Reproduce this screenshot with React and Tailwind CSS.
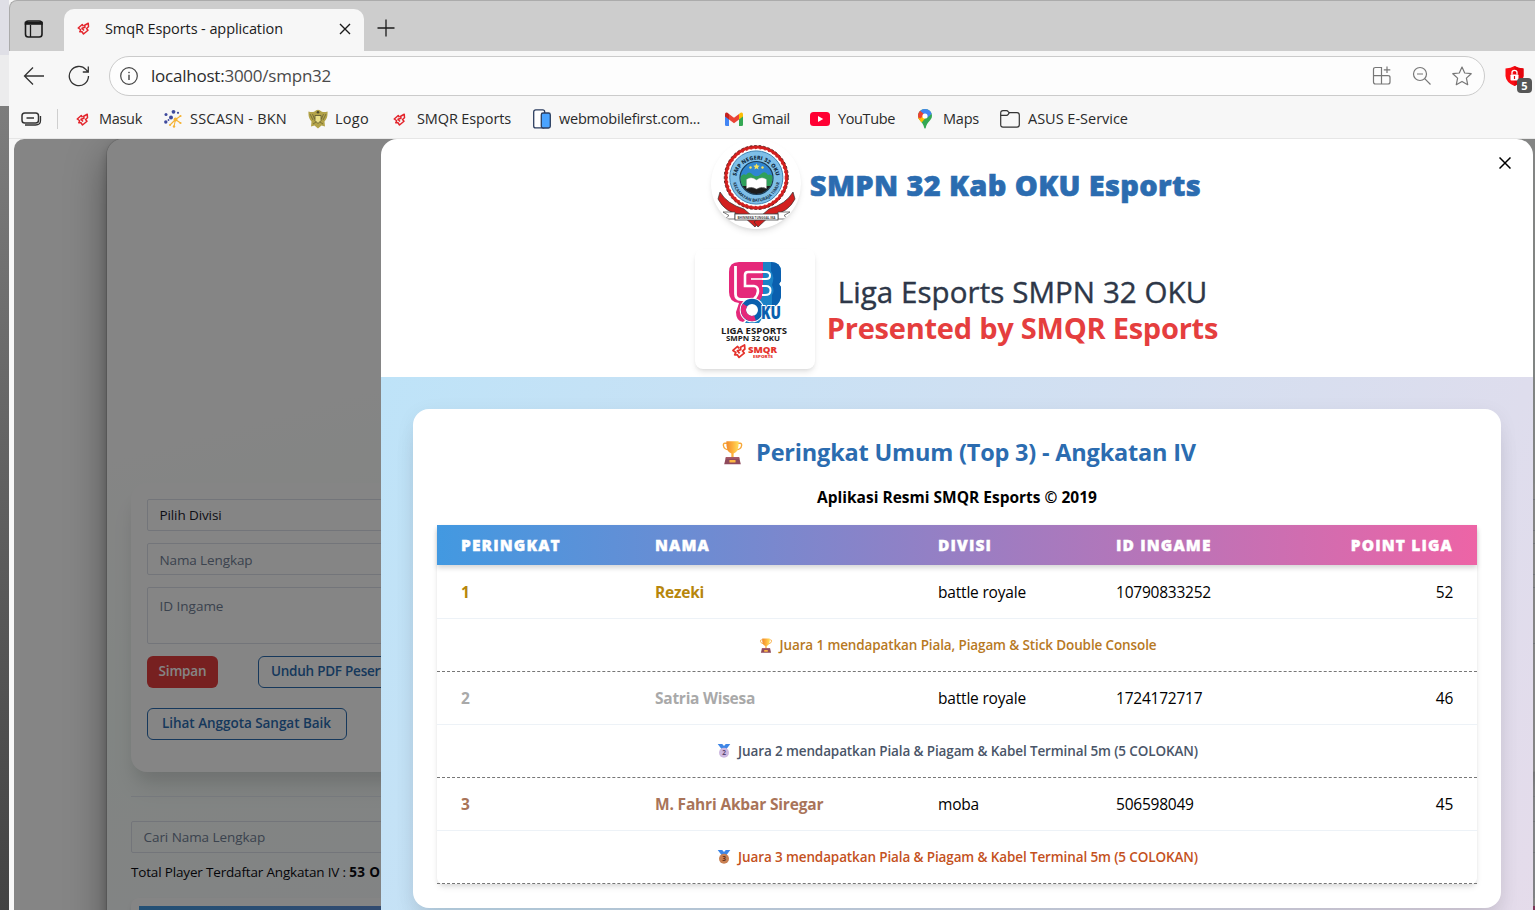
import { Fragment } from "react";

const SANS = "font-['Open_Sans','Noto_Sans',sans-serif]";

/* ---------- brand marks ---------- */

function SmqrMark({ className }) {
  return (
    <svg viewBox="0 0 26 26" className={className} fill="none" strokeLinejoin="round">
      <path d="M13 8.500 L10.500 5 L2.500 12 L7.500 15.500 L5.500 19.500 H10 L13 24 L22 16.500 L19 13 L23 9.500 L22.500 2.500 L15.500 6.500 L16 10.500 L10 12.500 L14 17" stroke="#e3242b" strokeWidth="3" />
    </svg>
  );
}

function SscasnIcon() {
  return (
    <svg viewBox="0 0 20 20" className="size-5">
      <g stroke="#f5b335" strokeWidth="1.1">
        <path d="M12.500 10.500 L17.500 7 M12.500 10.500 L17.500 14 M12.500 10.500 L11 17.500 M12.500 10.500 L7 16" />
      </g>
      <g fill="#f5b335">
        <circle cx="12.500" cy="10.500" r="1.900" />
        <circle cx="17.500" cy="7" r="1.100" />
        <circle cx="17.500" cy="14" r="1.100" />
        <circle cx="11" cy="17.500" r="1.200" />
        <circle cx="7" cy="16" r="1" />
      </g>
      <g fill="#3f4a9d">
        <circle cx="10.500" cy="2.800" r="1.900" />
        <circle cx="3" cy="5.500" r="1.500" />
        <circle cx="8" cy="8.500" r="2" />
        <circle cx="2.800" cy="13" r="1.700" />
        <circle cx="15" cy="3.800" r="1.100" />
        <circle cx="5.500" cy="11" r=".9" />
      </g>
    </svg>
  );
}

function GarudaIcon() {
  return (
    <svg viewBox="0 0 20 20" className="size-5">
      <path d="M0.500 2.500 Q4 3.500 6.500 2.500 Q10 -1 13.500 2.500 Q16 3.500 19.500 2.500 Q20 9 16.500 12.500 L17 17.500 L13.500 16.500 L10 19.500 L6.500 16.500 L3 17.500 L3.500 12.500 Q0 9 0.500 2.500Z" fill="#b3a348" />
      <path d="M2 5 L5 11 M4.500 5 L6.500 10 M18 5 L15 11 M15.500 5 L13.500 10 M5 15 L8 13 M15 15 L12 13" stroke="#6c6536" strokeWidth=".8" />
      <path d="M7 6.500 h6 v5 l-3 3 l-3 -3z" fill="#eadf86" stroke="#55502c" strokeWidth=".8" />
      <circle cx="10" cy="3.300" r="1.300" fill="#4f4a2a" />
    </svg>
  );
}

function PhonesIcon() {
  return (
    <svg viewBox="0 0 20 20" className="size-5">
      <rect x="1.700" y="0.900" width="11" height="18" rx="2" fill="#fff" stroke="#2c3e60" strokeWidth="1.300" />
      <rect x="9.300" y="4" width="9" height="15" rx="1.800" fill="#4aa3ff" stroke="#2c3e60" strokeWidth="1.300" />
    </svg>
  );
}

function GmailIcon() {
  return (
    <svg viewBox="0 0 20 20" className="size-5">
      <path d="M1 5.500 L5 8.500 V17 H2.300 Q1 17 1 15.700Z" fill="#4285f4" />
      <path d="M19 5.500 L15 8.500 V17 H17.700 Q19 17 19 15.700Z" fill="#34a853" />
      <path d="M15 5 L16.500 3.800 Q19 2.600 19 5.800 V7.500 L15 10.500Z" fill="#fbbc04" />
      <path d="M5 5 L10 8.800 L15 5 V10.500 L10 14.200 L5 10.500Z" fill="#ea4335" />
      <path d="M5 5 L3.500 3.800 Q1 2.600 1 5.800 V7.500 L5 10.500Z" fill="#c5221f" />
    </svg>
  );
}

function YoutubeIcon() {
  return (
    <svg viewBox="0 0 20 20" className="size-5">
      <rect x="0" y="3" width="20" height="14" rx="3.500" fill="#ff0033" />
      <path d="M8 7 L13.200 10 L8 13Z" fill="#fff" />
    </svg>
  );
}

function MapsIcon() {
  return (
    <svg viewBox="0 0 20 20" className="size-5">
      <defs>
        <clipPath id="pin">
          <path d="M10 0 C14 0 17 3 17 6.800 C17 11.500 11.800 13 10.800 18.700 Q10 20.500 9.200 18.700 C8.200 13 3 11.500 3 6.800 C3 3 6 0 10 0Z" />
        </clipPath>
      </defs>
      <g clipPath="url(#pin)">
        <rect width="20" height="20" fill="#34a853" />
        <path d="M0 8 L9 8 L10 9 L5.500 15 L0 16Z" fill="#fbbc04" />
        <path d="M5 2 L8 -2 H20 L17.500 4 L12 9 L7 4Z" fill="#4285f4" />
        <path d="M4.700 1.500 L9.500 5.500 L4.500 11 L2 9 L1 4Z" fill="#ea4335" />
        <path d="M2 8 L5.500 9.500 L10 5.500 L10 9.500 L5 15Z" fill="#fbbc04" />
      </g>
      <circle cx="10" cy="7" r="2.600" fill="#fff" />
    </svg>
  );
}

function FolderIcon() {
  return (
    <svg viewBox="0 0 20 20" className="size-5" fill="none" stroke="#333" strokeWidth="1.2">
      <path d="M0.700 4 Q0.700 1.700 3 1.700 H6.500 Q7.500 1.700 8.200 2.600 L9.200 3.700 H17 Q19.300 3.700 19.300 6 V15.800 Q19.300 18.100 17 18.100 H3 Q0.700 18.100 0.700 15.800Z" />
      <path d="M0.700 6.300 H6.500 Q7.500 6.300 8.200 5.300 L9.200 3.900" />
    </svg>
  );
}

/* ---------- prize icons ---------- */

function Trophy({ className }) {
  return (
    <svg viewBox="0 0 24 28" className={className}>
      <defs>
        <linearGradient id="cup" x1="0" x2="1">
          <stop offset="0" stopColor="#f08a2c" />
          <stop offset=".5" stopColor="#fdb03c" />
          <stop offset="1" stopColor="#ffdf5c" />
        </linearGradient>
      </defs>
      <path d="M6 3.500 H3.200 Q1.300 3.500 1.600 6 Q2.200 10.500 8 11 M18 3.500 H20.800 Q22.700 3.500 22.400 6 Q21.800 10.500 16 11" fill="none" stroke="#f7a83a" strokeWidth="1.6" />
      <path d="M5 1 H19 Q19.500 13.500 13.300 15 V20 H10.700 V15 Q4.500 13.500 5 1Z" fill="url(#cup)" />
      <path d="M4.500 19 H19.500 L21.500 27.500 H2.500Z" fill="#8f4a5c" />
      <path d="M4.500 19 H19.500 L20 21 H4Z" fill="#a55a68" />
      <rect x="8.500" y="22.500" width="7" height="3" rx=".6" fill="#fcb643" />
    </svg>
  );
}

function Medal({ place, fill, ink }) {
  return (
    <svg viewBox="0 0 14 16" className="h-4 w-3.5">
      <path d="M0.700 1 H5.200 L7 3 L8.800 1 H13.300 L9.500 6 H4.500Z" fill="#3f86e6" />
      <circle cx="7" cy="9.800" r="5" fill={fill} />
      <text x="7" y="12.200" textAnchor="middle" fontSize="6.500" fontWeight="700" fill={ink} fontFamily="Open Sans, sans-serif">
        {place}
      </text>
    </svg>
  );
}

/* ---------- crests ---------- */

function SchoolCrest() {
  return (
    <svg viewBox="0 0 90 90" className="size-[90px]">
      <defs>
        <path id="arcTop" d="M25 41 A20.300 20.300 0 1 1 65.600 41" />
        <path id="arcBottom" d="M21.500 39 A23.800 23.800 0 0 0 69.100 39" />
        <clipPath id="disc">
          <circle cx="45.500" cy="39" r="16" />
        </clipPath>
      </defs>
      <path d="M9 53 Q16 65 33 70 L48 83 L44 88 L31 76 Q14 74 7 60Z" fill="#d2201f" stroke="#333" strokeWidth=".7" />
      <path d="M82 53 Q75 65 58 70 L43 83 L47 88 L60 76 Q77 74 84 60Z" fill="#d2201f" stroke="#333" strokeWidth=".7" />
      <circle cx="45.300" cy="38.500" r="30.500" fill="#fff" stroke="#d2201f" strokeWidth="3" />
      <circle cx="45.300" cy="38.500" r="32" fill="none" stroke="#5c2320" strokeWidth="1" strokeDasharray="2.500 2" />
      <circle cx="45.300" cy="38.500" r="29" fill="none" stroke="#d2201f" strokeWidth="1.200" strokeDasharray="2 2.500" />
      <circle cx="45.300" cy="38.500" r="26.600" fill="#7fbfe8" stroke="#3d84b5" strokeWidth="1" />
      <circle cx="45.500" cy="39" r="16.500" fill="#2f86d1" stroke="#1b3c55" strokeWidth="1.200" />
      <g clipPath="url(#disc)">
        <path d="M28 41 Q31 33 35 36 Q38 31 42 36 Q46 39 50 35 Q54 31 57 36 Q61 34 64 41 V50 H28Z" fill="#2fa05a" />
        <path d="M28 47 H64 V60 H28Z" fill="#1d1d1d" />
      </g>
      <path d="M45.500 41 Q40 37 35.500 40.500 V49.500 Q41 47 45.500 50 Q50 47 55.500 49.500 V40.500 Q51 37 45.500 41Z" fill="#fff" stroke="#999" strokeWidth=".4" />
      <g fill="#f7e35a">
        <path d="M45.500 24.500 l1 2 l2.200 .2 l-1.700 1.500 l.5 2.200 l-2 -1.100 l-2 1.100 l.5 -2.200 l-1.700 -1.500 l2.200 -.2z" />
        <circle cx="39.500" cy="28.500" r="1.200" />
        <circle cx="51.500" cy="28.500" r="1.200" />
      </g>
      <text fontSize="5.500" fontWeight="800" fill="#16324a" fontFamily="Open Sans, sans-serif">
        <textPath href="#arcTop" startOffset="50%" textAnchor="middle">SMP NEGERI 32 OKU</textPath>
      </text>
      <text fontSize="4.300" fontWeight="700" fill="#16324a" fontFamily="Open Sans, sans-serif">
        <textPath href="#arcBottom" startOffset="50%" textAnchor="middle">KECAMATAN BATURAJA TIMUR</textPath>
      </text>
      <path d="M12 73 H24 V80 H14 L18 76.500Z M79 73 H67 V80 H77 L73 76.500Z" fill="#fff" stroke="#444" strokeWidth=".7" />
      <rect x="24" y="75" width="43" height="6" fill="#fff" stroke="#444" strokeWidth=".8" />
      <text x="45.500" y="79.600" fontSize="3.800" fontWeight="700" textAnchor="middle" fill="#444" textLength="38" lengthAdjust="spacingAndGlyphs" fontFamily="Open Sans, sans-serif">
        BHINNEKA TUNGGAL IKA
      </text>
    </svg>
  );
}

function LeagueCrest() {
  return (
    <svg viewBox="0 0 120 120" className="size-[120px]" fontFamily="Open Sans, sans-serif">
      <path d="M44 13 H68 V48 L62 60 L48 73 Q41 72 41 63 L44 54 Q34 53 34 43 V23 Q34 13 44 13Z" fill="#e5287a" />
      <path d="M68 13 H76 Q86 13 86 23 V32 L84 35 L86 38 V48 Q84 58 74 60 L64 74 H50 L60 60 L68 46Z" fill="#1b82c6" />
      <path d="M76 13 Q86 13 86 23 V32 L84 35 L86 38 V48 Q84 56 77 58 V46 Q80 42 77 36 Q80 28 76 22Z" fill="#0a5fae" />
      <path d="M40.500 17 V45 Q40.500 50.500 46 50.500 H54" stroke="#fff" strokeWidth="2.800" fill="none" />
      <path d="M67 23 H53 Q50 23 50 26 V37 H59 Q63 37.500 63 42 Q63 46 59 50" stroke="#fff" strokeWidth="2.600" fill="none" />
      <path d="M56 30 H67" stroke="#fff" strokeWidth="1.600" />
      <path d="M67 23 H71 Q75 23 75 26.500 Q75 30 71 30 H67 M67 37 H71 Q75.500 37 75.500 41.500 Q75.500 46 70 46 H67" stroke="#fff" strokeWidth="2" fill="none" />
      <circle cx="57" cy="61" r="12.300" fill="#fff" />
      <circle cx="57" cy="61" r="8.600" fill="#fff" stroke="#0a5fae" strokeWidth="5.200" />
      <path d="M50 56 A8.600 8.600 0 0 0 60 69" fill="none" stroke="#e5287a" strokeWidth="5.200" />
      <text x="66" y="69.500" fontSize="17.500" fontWeight="800" textLength="20" lengthAdjust="spacingAndGlyphs" fill="#0a5fae" stroke="#fff" strokeWidth="2" paintOrder="stroke">
        KU
      </text>
      <text x="59" y="85" fontSize="9.500" fontWeight="700" textAnchor="middle" textLength="66" lengthAdjust="spacingAndGlyphs" fill="#1c1c1c">
        LIGA ESPORTS
      </text>
      <text x="58" y="92.200" fontSize="7.500" fontWeight="700" textAnchor="middle" textLength="54" lengthAdjust="spacingAndGlyphs" fill="#1c1c1c">
        SMPN 32 OKU
      </text>
      <g transform="translate(36.500 94.500) scale(.58)">
        <path d="M13 8.500 L10.500 5 L2.500 12 L7.500 15.500 L5.500 19.500 H10 L13 24 L22 16.500 L19 13 L23 9.500 L22.500 2.500 L15.500 6.500 L16 10.500 L10 12.500 L14 17" fill="none" stroke="#e5332c" strokeWidth="3" strokeLinejoin="round" />
      </g>
      <text x="53" y="103.600" fontSize="8" fontWeight="800" textLength="29" lengthAdjust="spacingAndGlyphs" fill="#e5332c">
        SMQR
      </text>
      <text x="58" y="108.800" fontSize="4.200" fontWeight="800" textLength="20" lengthAdjust="spacingAndGlyphs" fill="#e5332c">
        ESPORTS
      </text>
    </svg>
  );
}

/* ---------- browser chrome ---------- */

function TabStrip() {
  return (
    <div className="flex h-[51px] items-end rounded-tl-lg border-t border-l border-[#ababab] bg-[#cdcdcd]">
      <div className="flex h-[41px] w-[54px] pl-[14px] pt-[9px]">
        <svg viewBox="0 0 20 20" className="size-5" fill="none" stroke="#1b1b1b" strokeWidth="1.6">
          <rect x="1.500" y="2" width="16.500" height="16" rx="2.800" />
          <path d="M1.500 3.500 H18 V5 H1.500Z" fill="#1b1b1b" />
          <path d="M6.500 6 V18" strokeWidth="1.300" />
        </svg>
      </div>
      <div className="flex h-[42px] w-[300px] items-center rounded-t-[10px] bg-[#f7f7f7] pb-[3px] pl-[13px]">
        <SmqrMark className="size-[13px]" />
        <span className="ml-[15px] text-[14.5px] tracking-[-0.09px] text-[#1b1b1b]">SmqR Esports - application</span>
        <svg viewBox="0 0 12 12" className="ml-auto mr-[13px] size-3" stroke="#1b1b1b" strokeWidth="1.4">
          <path d="M1 1 L11 11 M11 1 L1 11" />
        </svg>
      </div>
      <svg viewBox="0 0 18 18" className="mb-[14px] ml-[13px] size-[18px]" stroke="#1b1b1b" strokeWidth="1.3">
        <path d="M9 0.500 V17.500 M0.500 9 H17.500" />
      </svg>
    </div>
  );
}

function AddressBar() {
  return (
    <div className="flex h-[45px] items-center pt-[5px] pl-[14px]">
      <svg viewBox="0 0 22 20" className="h-5 w-[22px]" fill="none" stroke="#333" strokeWidth="1.3">
        <path d="M21 10 H1.500 M10 1.500 L1.500 10 L10 18.500" />
      </svg>
      <svg viewBox="0 0 22 22" className="ml-[23px] size-[22px]" fill="none" stroke="#333" strokeWidth="1.3">
        <path d="M20.500 11 A9.600 9.600 0 1 1 18 4.600 L20 6.800 M20.300 1.500 V7 H14.800" />
      </svg>
      <div className="ml-[19px] flex h-10 w-[1376px] items-center rounded-full border border-[#cbcbcb] bg-[#fdfdfd] pl-[10px] pr-3">
        <svg viewBox="0 0 18 18" className="size-[18px]" fill="none" stroke="#444" strokeWidth="1.2">
          <circle cx="9" cy="9" r="8.300" />
          <path d="M9 7.800 V13" strokeWidth="1.400" />
          <circle cx="9" cy="5.500" r=".5" strokeWidth=".9" />
        </svg>
        <span className="ml-[13px] text-[17px] tracking-[-0.23px] text-[#2c2c2c]">
          localhost:<span className="text-[#4a4a4a]">3000/smpn32</span>
        </span>
        <div className="ml-auto flex items-center gap-5 text-[#777]">
          <svg viewBox="0 0 20 20" className="size-5" fill="none" stroke="currentColor" strokeWidth="1.2">
            <path d="M9.500 18 H3.500 Q1.500 18 1.500 16 V3.500 Q1.500 1.500 3.500 1.500 H9.500 V18 H16 Q18 18 18 16 V11.500 Q18 9.700 16 9.700 H1.500 M15 0.500 V7 M11.800 3.800 H18.300" />
          </svg>
          <svg viewBox="0 0 20 20" className="size-5" fill="none" stroke="currentColor" strokeWidth="1.2">
            <circle cx="8" cy="8" r="6.500" />
            <path d="M5 8 H11 M12.700 12.700 L18.500 18.500" />
          </svg>
          <svg viewBox="0 0 20 20" className="size-5" fill="none" stroke="currentColor" strokeWidth="1.2" strokeLinejoin="round">
            <path d="M10 1 L12.700 7 L19.200 7.700 L14.400 12.100 L15.700 18.700 L10 15.400 L4.300 18.700 L5.600 12.100 L0.800 7.700 L7.300 7Z" />
          </svg>
        </div>
      </div>
      <div className="relative ml-[20px] size-5">
        <svg viewBox="0 0 20 20" className="size-5">
          <path d="M9.500 0 Q13 2.300 18.500 2.500 V10 Q18 16.500 9.500 20 Q1 16.500 0.500 10 V2.500 Q6 2.300 9.500 0Z" fill="#fb0d14" />
          <path d="M9.500 0 Q13 2.300 18.500 2.500 V10 Q18 16.500 9.500 20Z" fill="#e2040c" />
          <rect x="5.500" y="8.500" width="8" height="6" rx=".8" fill="#fff" />
          <path d="M7 8.500 V6.500 Q7 4.300 9.500 4.300 Q12 4.300 12 6.500 V8.500" fill="none" stroke="#fff" strokeWidth="1.300" />
          <path d="M9.500 10 V13" stroke="#e2040c" strokeWidth="1.200" />
        </svg>
        <span className="absolute top-3 left-3 flex h-[15px] w-[15px] items-center justify-center rounded-[4px] bg-[#565656] text-[11px] leading-none font-bold text-white">
          5
        </span>
      </div>
    </div>
  );
}

const BOOKMARKS = [
  { label: "Masuk", icon: <SmqrMark className="mr-[2px] size-[13px]" />, slot: "w-[90px]", text: "ml-[6px] tracking-[-0.31px]" },
  { label: "SSCASN - BKN", icon: <SscasnIcon />, slot: "w-[145px]", text: "ml-[7px] tracking-[0.21px]" },
  { label: "Logo", icon: <GarudaIcon />, slot: "w-[82px]", text: "ml-[7px] tracking-[0.28px]" },
  { label: "SMQR Esports", icon: <SmqrMark className="mr-[2px] size-[13px]" />, slot: "w-[142px]", text: "ml-[7px] tracking-[-0.13px]" },
  { label: "webmobilefirst.com...", icon: <PhonesIcon />, slot: "w-[192px]", text: "ml-[7px] tracking-[-0.22px]" },
  { label: "Gmail", icon: <GmailIcon />, slot: "w-[86px]", text: "ml-[8px] tracking-[-0.27px]" },
  { label: "YouTube", icon: <YoutubeIcon />, slot: "w-[105px]", text: "ml-[8px] tracking-[-0.38px]" },
  { label: "Maps", icon: <MapsIcon />, slot: "w-[85px]", text: "ml-[8px] tracking-[-0.22px]" },
  { label: "ASUS E-Service", icon: <FolderIcon />, slot: "w-[140px]", text: "ml-[8px] tracking-[-0.01px]" },
];

function BookmarksBar() {
  return (
    <div className="flex h-[43px] items-center border-b border-[#e6e6e6] pt-1 pl-[12px]">
      <svg viewBox="0 0 22 16" className="h-4 w-[22px]" fill="none" stroke="#333" strokeWidth="1.5">
        <rect x="1" y="2" width="16.500" height="10" rx="2.800" />
        <path d="M5.500 7 H13" />
        <path d="M4 14 H14.500 Q19.500 14 19.500 9.500 V5" strokeWidth="1.300" />
      </svg>
      <div className="ml-[14px] h-5 w-px bg-[#cfcfcf]" />
      <div className="ml-[15px] flex items-center">
        {BOOKMARKS.map((b, i) => (
          <div key={i} className={`flex shrink-0 items-center whitespace-nowrap ${b.slot}`}>
            <span className="flex size-5 shrink-0 items-center justify-center">{b.icon}</span>
            <span className={`text-[14.5px] leading-5 text-[#2a2a2a] ${b.text}`}>{b.label}</span>
          </div>
        ))}
      </div>
    </div>
  );
}

/* ---------- page under the dialog ---------- */

function RegistrationPage() {
  return (
    <div className="h-full bg-white pl-[93px] text-[13.5px]">
      <div className="h-[900px] w-[1440px] rounded-2xl bg-[linear-gradient(165deg,#ffffff_25%,#f8fffb_46%,#fbfbff_75%,#f3f6ff_100%)] pt-[344px] pl-6 shadow-[0_0_0_1px_rgba(0,0,0,0.1),0_5px_10px_rgba(0,0,0,0.2),0_15px_40px_rgba(0,0,0,0.4)]">
        <div className="h-[289px] rounded-2xl bg-white pt-4 pl-4 shadow-[0_20px_25px_-5px_rgba(0,0,0,0.1),0_10px_15px_-3px_rgba(0,0,0,0.06)]">
          <div className="h-8 rounded-[2px] border border-[#dde1ea] pl-[11.5px] leading-[30px] tracking-[-0.11px] text-[#1a202c]">Pilih Divisi</div>
          <div className="mt-3 h-8 rounded-[2px] border border-[#dde1ea] pl-[11.5px] leading-8 tracking-[-0.11px] text-[#718096]">Nama Lengkap</div>
          <div className="mt-3 h-[57px] rounded-[2px] border border-[#dde1ea] pt-2 pl-[11.5px] leading-5 tracking-[-0.01px] text-[#718096]">ID Ingame</div>
          <div className="mt-3 flex font-semibold">
            <div className="flex h-8 w-[71px] items-center justify-center rounded-md bg-[#e53e3e] pb-px tracking-[-0.15px] text-white">Simpan</div>
            <div className="ml-10 flex h-8 w-[190px] items-center rounded-md border border-[#2b6cb0] pb-px pl-3 tracking-[-0.25px] whitespace-nowrap text-[#2b6cb0]">
              Unduh PDF Peserta
            </div>
          </div>
          <div className="mt-5 flex h-8 w-[200px] items-center justify-center rounded-md border border-[#2b6cb0] pr-px pb-px font-semibold tracking-[-0.04px] text-[#2b6cb0]">
            Lihat Anggota Sangat Baik
          </div>
        </div>
        <div className="mt-6 h-px bg-[#e2e8f0]" />
        <div className="mt-6 h-8 rounded-[2px] border border-[#dde1ea] pl-[11.5px] leading-[30px] tracking-[-0.06px] text-[#718096]">Cari Nama Lengkap</div>
        <div className="mt-2 leading-[22px] text-[#0b0b12]">
          <span className="tracking-[-0.17px]">Total Player Terdaftar Angkatan IV : </span>
          <b className="tracking-[0.35px]">53 Orang</b>
        </div>
        <div className="mt-[15px] h-20 rounded-lg bg-white pt-2 pl-2 shadow-md">
          <div className="h-10 bg-linear-to-r/srgb from-[#4299e1] to-[#ed64a6]" />
        </div>
      </div>
    </div>
  );
}

/* ---------- leaderboard dialog ---------- */

const ROWS = [
  {
    rank: 1,
    name: "Rezeki",
    nameClass: "text-[#b7860b] tracking-[-0.24px]",
    division: "battle royale",
    id: "10790833252",
    points: 52,
    prize: "Juara 1 mendapatkan Piala, Piagam & Stick Double Console",
    prizeClass: "text-[#b7791f]",
    icon: <Trophy className="h-[15px] w-[14px]" />,
  },
  {
    rank: 2,
    name: "Satria Wisesa",
    nameClass: "text-[#a9a9a9] tracking-[-0.26px]",
    division: "battle royale",
    id: "1724172717",
    points: 46,
    prize: "Juara 2 mendapatkan Piala & Piagam & Kabel Terminal 5m (5 COLOKAN)",
    prizeClass: "text-[#4a5568]",
    icon: <Medal place="2" fill="#cdb8e0" ink="#5a4570" />,
  },
  {
    rank: 3,
    name: "M. Fahri Akbar Siregar",
    nameClass: "text-[#a97459] tracking-[-0.17px]",
    division: "moba",
    id: "506598049",
    points: 45,
    prize: "Juara 3 mendapatkan Piala & Piagam & Kabel Terminal 5m (5 COLOKAN)",
    prizeClass: "text-[#c4511d]",
    icon: <Medal place="3" fill="#c98052" ink="#5f2f18" />,
  },
];

function Leaderboard() {
  return (
    <div className="rounded-b-md shadow-[0_4px_6px_-1px_rgba(0,0,0,0.1),0_2px_4px_-1px_rgba(0,0,0,0.08)]">
      <div className="flex h-10 items-center bg-linear-to-r/srgb from-[#4299e1] to-[#ed64a6] pt-[2px] pr-6 text-[15.5px] font-extrabold tracking-[1.14px] text-white shadow-[0_3px_5px_rgba(0,0,0,0.16)] [-webkit-text-stroke:0.4px_white]">
        <div className="w-[194px] pl-6">PERINGKAT</div>
        <div className="w-[283px] pl-6">NAMA</div>
        <div className="w-[178px] pl-6">DIVISI</div>
        <div className="w-[188px] pl-6">ID INGAME</div>
        <div className="flex-1 text-right">POINT LIGA</div>
      </div>
      <table className="mt-px w-full table-fixed border-separate border-spacing-0 text-[15.5px] text-black">
        <colgroup>
          <col className="w-[194px]" />
          <col className="w-[283px]" />
          <col className="w-[178px]" />
          <col className="w-[188px]" />
          <col className="w-[197px]" />
        </colgroup>
        <tbody>
          {ROWS.map((r) => (
            <Fragment key={r.rank}>
              <tr className="h-[53px] [&>td]:border-b [&>td]:border-[#edf2f7] [&>td]:p-0 [&>td]:pt-[2px] [&>td]:pl-6">
                <td className={`font-bold ${r.nameClass}`}>{r.rank}</td>
                <td className={`font-bold ${r.nameClass}`}>{r.name}</td>
                <td className="tracking-[-0.19px]">{r.division}</td>
                <td className="tracking-[-0.23px]">{r.id}</td>
                <td className="pr-6! text-right tracking-[-0.3px]">{r.points}</td>
              </tr>
              <tr className="h-[53px]">
                <td colSpan={5} className="border-b border-dashed border-[#777] p-0">
                  <div className={`flex items-center justify-center gap-[7px] pl-px text-[13.5px] font-semibold tracking-[-0.12px] ${r.prizeClass}`}>
                    {r.icon}
                    <span>{r.prize}</span>
                  </div>
                </td>
              </tr>
            </Fragment>
          ))}
        </tbody>
      </table>
    </div>
  );
}

function Dialog() {
  return (
    <div className="absolute top-0 left-[367px] h-[2738px] w-[1152px] overflow-hidden rounded-2xl bg-white">
      <div className="h-[238px]">
        <div className="flex h-[90px] items-center justify-center gap-[9px] pr-[2px]">
          <div className="size-[90px] overflow-hidden rounded-full bg-white shadow-md">
            <SchoolCrest />
          </div>
          <h1 className="mt-[2px] text-[29px] font-extrabold tracking-[0.36px] text-[#2b6cb0] [-webkit-text-stroke:0.6px_#2b6cb0]">SMPN 32 Kab OKU Esports</h1>
        </div>
        <div className="mt-5 flex h-[120px] items-center justify-center gap-3 pr-px">
          <div className="size-[120px] rounded-lg bg-white shadow-md">
            <LeagueCrest />
          </div>
          <div className="pt-px text-center text-[29.5px] leading-9">
            <div className="font-medium tracking-[0.08px] text-[#2d3748] [-webkit-text-stroke:0.4px_#2d3748]">Liga Esports SMPN 32 OKU</div>
            <div className="text-[29px] font-bold tracking-[-0.24px] text-[#e53e3e]">Presented by SMQR Esports</div>
          </div>
        </div>
      </div>
      <div className="h-[2500px] bg-linear-to-br/srgb from-[#bee3f8] to-[#fed7e2] px-8 pt-8">
        <div className="h-[499px] rounded-2xl bg-white px-6 pt-7 shadow-[0_20px_25px_-5px_rgba(0,0,0,0.1),0_4px_20px_rgba(0,0,0,0.06)]">
          <div className="flex h-8 items-center justify-center gap-[13px] pl-1">
            <Trophy className="-mt-px h-[25px] w-[21px]" />
            <h2 className="text-[23.5px] font-bold tracking-[-0.19px] text-[#2b6cb0]">Peringkat Umum (Top 3) - Angkatan IV</h2>
          </div>
          <p className="mt-3 mb-3 text-center text-[15.5px] leading-8 font-bold text-black">Aplikasi Resmi SMQR Esports © 2019</p>
          <Leaderboard />
        </div>
      </div>
      <button className="absolute top-[18px] right-[22px] size-3">
        <svg viewBox="0 0 12 12" className="size-3" stroke="#000" strokeWidth="1.5">
          <path d="M0.500 0.500 L11.500 11.500 M11.500 0.500 L0.500 11.500" />
        </svg>
      </button>
    </div>
  );
}

export default function App() {
  return (
    <div className={`flex h-[910px] w-[1535px] overflow-hidden bg-[#f7f7f7] ${SANS}`}>
      <div className="flex w-[9px] shrink-0 flex-col">
        <div className="h-[55px] bg-[#dfdfe6]" />
        <div className="h-[51px] bg-[#ececed]" />
        <div className="flex-1 bg-linear-to-b from-[#7d7d7d] to-[#434343]" />
      </div>
      <div className="flex min-w-0 flex-1 flex-col">
        <TabStrip />
        <AddressBar />
        <BookmarksBar />
        <div className="relative ml-[5px] flex-1 overflow-hidden rounded-tl-[10px]">
          <RegistrationPage />
          <div className="absolute inset-0 bg-black/48" />
          <Dialog />
        </div>
      </div>
    </div>
  );
}
